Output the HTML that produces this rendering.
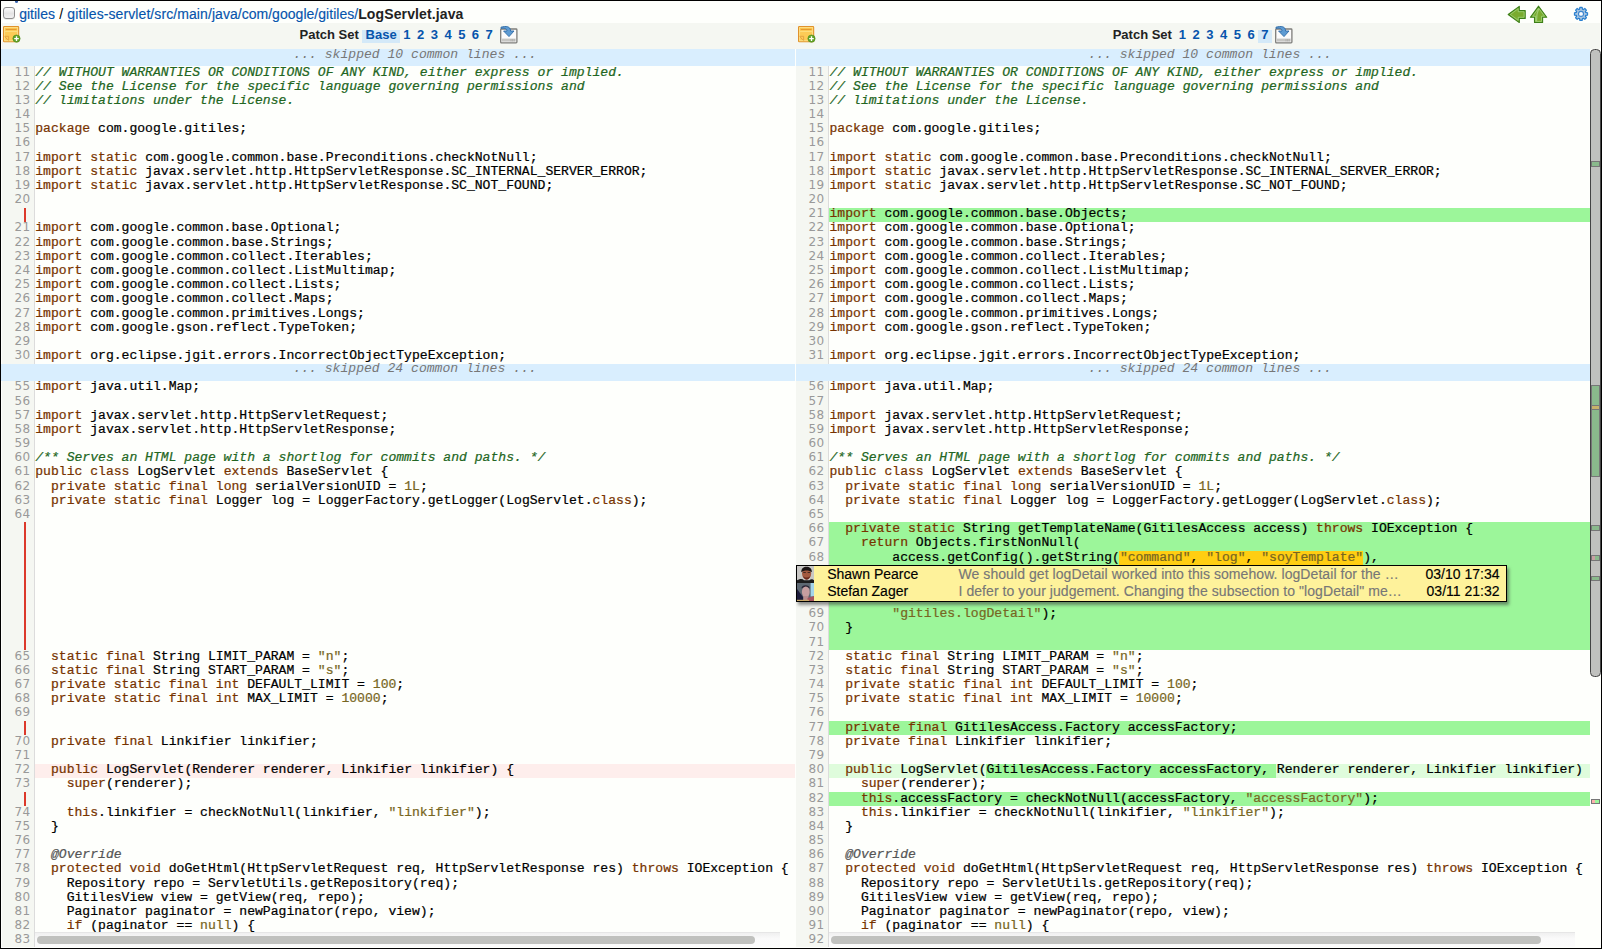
<!DOCTYPE html>
<html><head><meta charset="utf-8"><title>LogServlet.java</title>
<style>
html,body{margin:0;padding:0}
body{width:1602px;height:949px;position:relative;overflow:hidden;background:#fefffc;font-family:"Liberation Sans",Arial,sans-serif;color:#000}
.abs,.abs *{position:absolute}
div{position:absolute;box-sizing:border-box}
.gut{background:#f5f7f2;border-right:1px solid #dcdcdc}
.n{font:12px "DejaVu Sans","Liberation Sans",sans-serif;letter-spacing:.45px;color:#999;text-align:right;width:28.7px;height:14px;line-height:10.4px;white-space:pre}
pre{position:absolute;margin:0;font:13.08px "Liberation Mono",monospace;line-height:12.4px;height:14px;white-space:pre;color:#000;overflow:visible;-webkit-text-stroke:.22px currentColor}
pre i{font-style:italic}
.k{color:#730}.s{color:#762}.cm{color:#262}.mt{color:#555}
.ins{background:#9cf69a}.insbg{background:#dffcdc}.delbg{background:#feeeec}
.skip{background:#d9eefe;height:17px}
.skip span{position:absolute;left:34px;right:0;text-align:center;font:italic 13.08px "Liberation Mono",monospace;color:#777;line-height:17px;top:-3.5px}
.bar{background:#dc392b;width:2px}
a{color:#0654ac;text-decoration:none}
#path a,.cb div{-webkit-text-stroke:.15px currentColor}
.hdr{background:#f5f7f2}
.ps{font:bold 13px "Liberation Sans",Arial,sans-serif;line-height:13px;height:13px;white-space:pre;color:#222}
.ps a{display:inline-block;position:static;padding:0 3.25px;height:13px}
.selbg{background:#d4e9f8;height:12.7px;top:30px}
</style></head><body>

<div style="left:1px;top:1px;width:1600px;height:22px;background:#fefffc"></div>
<div style="left:15px;top:1px;width:3px;height:1.5px;background:#3a66b0;border-radius:0 0 2px 2px"></div>
<div style="left:3.2px;top:7px;width:11.8px;height:11.6px;border:1px solid #8e8e8e;border-radius:3px;background:linear-gradient(#fdfdfd,#e4e4e4 55%,#f2f2f2);box-shadow:0 .5px .5px rgba(0,0,0,.15)"></div>
<div id="path" style="left:19.2px;top:5.5px;height:16px;font-size:14px;line-height:16px;white-space:pre"><a>gitiles</a><span style="word-spacing:.35px"> / </span><a><span style="letter-spacing:.088px">gitiles-servlet/src/main/</span><span style="letter-spacing:.03px">java/com/google/gitiles/</span></a><b style="color:#222;letter-spacing:.12px">LogServlet.java</b></div>
<svg style="position:absolute;left:1504px;top:2px" width="48" height="24" viewBox="1504 2 48 24"><path d="M1508.2 14.5 L1519.3 6.4 L1519.3 10.6 L1525.2 10.6 L1525.2 18.4 L1519.3 18.4 L1519.3 22.6 Z" fill="#7aab2f" stroke="#3c7f18" stroke-width="1.1" stroke-linejoin="round"/><path d="M1510.3 14.5 L1518.2 8.7 L1518.2 11.7 L1524.1 11.7 L1524.1 17.3 L1518.2 17.3 L1518.2 20.3 Z" fill="none" stroke="#a9dc8c" stroke-width=".8" opacity=".85"/><path d="M1538.6 6.2 L1546.7 17.3 L1542.6 17.3 L1542.6 22.5 L1534.5 22.5 L1534.5 17.3 L1530.4 17.3 Z" fill="#7aab2f" stroke="#3c7f18" stroke-width="1.1" stroke-linejoin="round"/><path d="M1538.6 8.2 L1544.5 16.2 L1541.5 16.2 L1541.5 21.4 L1535.6 21.4 L1535.6 16.2 L1532.7 16.2 Z" fill="none" stroke="#a9dc8c" stroke-width=".8" opacity=".85"/><path d="M1538.6 9 L1537 14 L1536.5 21" fill="none" stroke="#b9e29e" stroke-width="1.2" opacity=".6"/></svg>
<svg style="position:absolute;left:1572px;top:5px" width="18" height="18" viewBox="1572 5 18 18"><polygon points="1585.68,12.45 1587.50,12.78 1587.50,15.02 1585.68,15.35 1585.33,16.19 1586.39,17.71 1584.81,19.29 1583.29,18.23 1582.45,18.58 1582.12,20.40 1579.88,20.40 1579.55,18.58 1578.71,18.23 1577.19,19.29 1575.61,17.71 1576.67,16.19 1576.32,15.35 1574.50,15.02 1574.50,12.78 1576.32,12.45 1576.67,11.61 1575.61,10.09 1577.19,8.51 1578.71,9.57 1579.55,9.22 1579.88,7.40 1582.12,7.40 1582.45,9.22 1583.29,9.57 1584.81,8.51 1586.39,10.09 1585.33,11.61" fill="#a9c6e0" stroke="#2a80d0" stroke-width="1.25" stroke-linejoin="round"/><circle cx="1581" cy="13.9" r="2.5" fill="#fbfdff" stroke="#3d86cf" stroke-width="1.1"/></svg>
<div class="hdr" style="left:2px;top:23px;width:1598px;height:26px"></div>
<svg style="position:absolute;left:3px;top:26px" width="18" height="18" viewBox="0 0 18 18"><rect x="0.55" y="0.55" width="15.1" height="15.2" rx=".7" fill="#fccb56" stroke="#e0922b" stroke-width="1.1"/><rect x="1.6" y="1.6" width="13" height="13.1" fill="none" stroke="#fde08a" stroke-width=".9"/><rect x="2.1" y="2.1" width="12" height="2.6" fill="#fbc148"/><rect x="2.9" y="3" width="10.6" height="1" fill="#e59a2e"/><rect x="2.1" y="4.8" width="12" height=".9" fill="#fde58f"/><path d="M1.6 10.3 L5.6 10.3 L5.6 14.6 M2 10.8 L5 14.2" fill="none" stroke="#e2a040" stroke-width=".9"/><circle cx="13.5" cy="12.6" r="3.65" fill="#62a126" stroke="#4f8e1e" stroke-width=".6"/><path d="M11.2 12.6 H15.8 M13.5 10.3 V14.9" stroke="#fff" stroke-width="1.35"/></svg>
<svg style="position:absolute;left:798px;top:26px" width="18" height="18" viewBox="0 0 18 18"><rect x="0.55" y="0.55" width="15.1" height="15.2" rx=".7" fill="#fccb56" stroke="#e0922b" stroke-width="1.1"/><rect x="1.6" y="1.6" width="13" height="13.1" fill="none" stroke="#fde08a" stroke-width=".9"/><rect x="2.1" y="2.1" width="12" height="2.6" fill="#fbc148"/><rect x="2.9" y="3" width="10.6" height="1" fill="#e59a2e"/><rect x="2.1" y="4.8" width="12" height=".9" fill="#fde58f"/><path d="M1.6 10.3 L5.6 10.3 L5.6 14.6 M2 10.8 L5 14.2" fill="none" stroke="#e2a040" stroke-width=".9"/><circle cx="13.5" cy="12.6" r="3.65" fill="#62a126" stroke="#4f8e1e" stroke-width=".6"/><path d="M11.2 12.6 H15.8 M13.5 10.3 V14.9" stroke="#fff" stroke-width="1.35"/></svg>
<div class="selbg" style="left:362px;width:38px"></div><div class="selbg" style="left:1258.3px;width:13.7px"></div>
<div class="ps" style="left:299.5px;top:28.2px">Patch Set <a class="sel">Base</a><a>1</a><a>2</a><a>3</a><a>4</a><a>5</a><a>6</a><a>7</a></div>
<svg style="position:absolute;left:500px;top:25.5px" width="18" height="18" viewBox="0 0 18 18"><rect x="0.7" y="3" width="16.2" height="13.9" rx=".8" fill="#fbfbfb" stroke="#7d7d7a" stroke-width="1.3"/><rect x="1.9" y="12.6" width="13.8" height="3" fill="#c6c6c3"/><path d="M11 13 V15.4 M12.6 13 V15.4 M14.2 13 V15.4" stroke="#a9a8a5" stroke-width=".7"/><path d="M1 1.2 C6 -0.2 10.5 0.2 10.6 5 L14 5 L9 10.6 L3.6 5 L7 5 C7 3 5 1.8 1 2.4 Z" fill="#5d9bd3" stroke="#2c6aa6" stroke-width=".9" stroke-linejoin="round"/></svg>
<div class="ps" style="left:1112.7px;top:28.2px">Patch Set <a>1</a><a>2</a><a>3</a><a>4</a><a>5</a><a>6</a><a class="sel">7</a></div>
<svg style="position:absolute;left:1275px;top:25.5px" width="18" height="18" viewBox="0 0 18 18"><rect x="0.7" y="3" width="16.2" height="13.9" rx=".8" fill="#fbfbfb" stroke="#7d7d7a" stroke-width="1.3"/><rect x="1.9" y="12.6" width="13.8" height="3" fill="#c6c6c3"/><path d="M11 13 V15.4 M12.6 13 V15.4 M14.2 13 V15.4" stroke="#a9a8a5" stroke-width=".7"/><path d="M1 1.2 C6 -0.2 10.5 0.2 10.6 5 L14 5 L9 10.6 L3.6 5 L7 5 C7 3 5 1.8 1 2.4 Z" fill="#5d9bd3" stroke="#2c6aa6" stroke-width=".9" stroke-linejoin="round"/></svg>
<div class="gut" style="left:2px;top:66px;width:33px;height:881px"></div>
<div class="gut" style="left:796px;top:66px;width:33px;height:881px"></div>
<div class="ins" style="left:829px;top:522px;width:761px;height:128.20px"></div>
<div class="delbg" style="left:35px;top:763.64px;width:760px;height:14.18px"></div>
<div class="ins" style="left:829px;top:207.80px;width:761px;height:14.18px"></div>
<div class="ins" style="left:829px;top:522.70px;width:761px;height:14.18px"></div>
<div class="ins" style="left:829px;top:536.88px;width:761px;height:14.18px"></div>
<div class="ins" style="left:829px;top:551.06px;width:761px;height:14.18px"></div>
<div class="ins" style="left:829px;top:607.66px;width:761px;height:14.18px"></div>
<div class="ins" style="left:829px;top:621.84px;width:761px;height:14.18px"></div>
<div class="ins" style="left:829px;top:636.02px;width:761px;height:14.18px"></div>
<div class="ins" style="left:829px;top:721.10px;width:761px;height:14.18px"></div>
<div class="insbg" style="left:829px;top:763.64px;width:761px;height:14.18px"></div>
<div class="ins" style="left:829px;top:792.00px;width:761px;height:14.18px"></div>
<div class="insbg" style="left:829px;top:763.64px;width:761px;height:14.18px"></div>
<div class="ins" style="left:985.96px;top:763.64px;width:290.38px;height:14.18px"></div>
<div style="background:#ffce12;left:1119.38px;top:551.06px;width:243.29px;height:14.18px"></div>
<div style="left:0;top:0;width:795px;height:947px;overflow:hidden">
<div class="n" style="left:2px;top:66.50px">11</div>
<pre style="left:35.25px;top:66.50px"><i class="cm">// WITHOUT WARRANTIES OR CONDITIONS OF ANY KIND, either express or implied.</i></pre>
<div class="n" style="left:2px;top:80.68px">12</div>
<pre style="left:35.25px;top:80.68px"><i class="cm">// See the License for the specific language governing permissions and</i></pre>
<div class="n" style="left:2px;top:94.86px">13</div>
<pre style="left:35.25px;top:94.86px"><i class="cm">// limitations under the License.</i></pre>
<div class="n" style="left:2px;top:109.04px">14</div>
<div class="n" style="left:2px;top:123.22px">15</div>
<pre style="left:35.25px;top:123.22px"><span class="k">package</span> com.google.gitiles;</pre>
<div class="n" style="left:2px;top:137.40px">16</div>
<div class="n" style="left:2px;top:151.58px">17</div>
<pre style="left:35.25px;top:151.58px"><span class="k">import</span> <span class="k">static</span> com.google.common.base.Preconditions.checkNotNull;</pre>
<div class="n" style="left:2px;top:165.76px">18</div>
<pre style="left:35.25px;top:165.76px"><span class="k">import</span> <span class="k">static</span> javax.servlet.http.HttpServletResponse.SC_INTERNAL_SERVER_ERROR;</pre>
<div class="n" style="left:2px;top:179.94px">19</div>
<pre style="left:35.25px;top:179.94px"><span class="k">import</span> <span class="k">static</span> javax.servlet.http.HttpServletResponse.SC_NOT_FOUND;</pre>
<div class="n" style="left:2px;top:194.12px">20</div>
<div class="n" style="left:2px;top:222.48px">21</div>
<pre style="left:35.25px;top:222.48px"><span class="k">import</span> com.google.common.base.Optional;</pre>
<div class="n" style="left:2px;top:236.66px">22</div>
<pre style="left:35.25px;top:236.66px"><span class="k">import</span> com.google.common.base.Strings;</pre>
<div class="n" style="left:2px;top:250.84px">23</div>
<pre style="left:35.25px;top:250.84px"><span class="k">import</span> com.google.common.collect.Iterables;</pre>
<div class="n" style="left:2px;top:265.02px">24</div>
<pre style="left:35.25px;top:265.02px"><span class="k">import</span> com.google.common.collect.ListMultimap;</pre>
<div class="n" style="left:2px;top:279.20px">25</div>
<pre style="left:35.25px;top:279.20px"><span class="k">import</span> com.google.common.collect.Lists;</pre>
<div class="n" style="left:2px;top:293.38px">26</div>
<pre style="left:35.25px;top:293.38px"><span class="k">import</span> com.google.common.collect.Maps;</pre>
<div class="n" style="left:2px;top:307.56px">27</div>
<pre style="left:35.25px;top:307.56px"><span class="k">import</span> com.google.common.primitives.Longs;</pre>
<div class="n" style="left:2px;top:321.74px">28</div>
<pre style="left:35.25px;top:321.74px"><span class="k">import</span> com.google.gson.reflect.TypeToken;</pre>
<div class="n" style="left:2px;top:335.92px">29</div>
<div class="n" style="left:2px;top:350.10px">30</div>
<pre style="left:35.25px;top:350.10px"><span class="k">import</span> org.eclipse.jgit.errors.IncorrectObjectTypeException;</pre>
<div class="n" style="left:2px;top:381.40px">55</div>
<pre style="left:35.25px;top:381.40px"><span class="k">import</span> java.util.Map;</pre>
<div class="n" style="left:2px;top:395.58px">56</div>
<div class="n" style="left:2px;top:409.76px">57</div>
<pre style="left:35.25px;top:409.76px"><span class="k">import</span> javax.servlet.http.HttpServletRequest;</pre>
<div class="n" style="left:2px;top:423.94px">58</div>
<pre style="left:35.25px;top:423.94px"><span class="k">import</span> javax.servlet.http.HttpServletResponse;</pre>
<div class="n" style="left:2px;top:438.12px">59</div>
<div class="n" style="left:2px;top:452.30px">60</div>
<pre style="left:35.25px;top:452.30px"><i class="cm">/** Serves an HTML page with a shortlog for commits and paths. */</i></pre>
<div class="n" style="left:2px;top:466.48px">61</div>
<pre style="left:35.25px;top:466.48px"><span class="k">public</span> <span class="k">class</span> LogServlet <span class="k">extends</span> BaseServlet {</pre>
<div class="n" style="left:2px;top:480.66px">62</div>
<pre style="left:35.25px;top:480.66px">  <span class="k">private</span> <span class="k">static</span> <span class="k">final</span> <span class="k">long</span> serialVersionUID = <span class="s">1L</span>;</pre>
<div class="n" style="left:2px;top:494.84px">63</div>
<pre style="left:35.25px;top:494.84px">  <span class="k">private</span> <span class="k">static</span> <span class="k">final</span> Logger log = LoggerFactory.getLogger(LogServlet.<span class="k">class</span>);</pre>
<div class="n" style="left:2px;top:509.02px">64</div>
<div class="n" style="left:2px;top:650.70px">65</div>
<pre style="left:35.25px;top:650.70px">  <span class="k">static</span> <span class="k">final</span> String LIMIT_PARAM = <span class="s">&quot;n&quot;</span>;</pre>
<div class="n" style="left:2px;top:664.88px">66</div>
<pre style="left:35.25px;top:664.88px">  <span class="k">static</span> <span class="k">final</span> String START_PARAM = <span class="s">&quot;s&quot;</span>;</pre>
<div class="n" style="left:2px;top:679.06px">67</div>
<pre style="left:35.25px;top:679.06px">  <span class="k">private</span> <span class="k">static</span> <span class="k">final</span> <span class="k">int</span> DEFAULT_LIMIT = <span class="s">100</span>;</pre>
<div class="n" style="left:2px;top:693.24px">68</div>
<pre style="left:35.25px;top:693.24px">  <span class="k">private</span> <span class="k">static</span> <span class="k">final</span> <span class="k">int</span> MAX_LIMIT = <span class="s">10000</span>;</pre>
<div class="n" style="left:2px;top:707.42px">69</div>
<div class="n" style="left:2px;top:735.78px">70</div>
<pre style="left:35.25px;top:735.78px">  <span class="k">private</span> <span class="k">final</span> Linkifier linkifier;</pre>
<div class="n" style="left:2px;top:749.96px">71</div>
<div class="n" style="left:2px;top:764.14px">72</div>
<pre style="left:35.25px;top:764.14px">  <span class="k">public</span> LogServlet(Renderer renderer, Linkifier linkifier) {</pre>
<div class="n" style="left:2px;top:778.32px">73</div>
<pre style="left:35.25px;top:778.32px">    <span class="k">super</span>(renderer);</pre>
<div class="n" style="left:2px;top:806.68px">74</div>
<pre style="left:35.25px;top:806.68px">    <span class="k">this</span>.linkifier = checkNotNull(linkifier, <span class="s">&quot;linkifier&quot;</span>);</pre>
<div class="n" style="left:2px;top:820.86px">75</div>
<pre style="left:35.25px;top:820.86px">  }</pre>
<div class="n" style="left:2px;top:835.04px">76</div>
<div class="n" style="left:2px;top:849.22px">77</div>
<pre style="left:35.25px;top:849.22px">  <i class="mt">@Override</i></pre>
<div class="n" style="left:2px;top:863.40px">78</div>
<pre style="left:35.25px;top:863.40px">  <span class="k">protected</span> <span class="k">void</span> doGetHtml(HttpServletRequest req, HttpServletResponse res) <span class="k">throws</span> IOException {</pre>
<div class="n" style="left:2px;top:877.58px">79</div>
<pre style="left:35.25px;top:877.58px">    Repository repo = ServletUtils.getRepository(req);</pre>
<div class="n" style="left:2px;top:891.76px">80</div>
<pre style="left:35.25px;top:891.76px">    GitilesView view = getView(req, repo);</pre>
<div class="n" style="left:2px;top:905.94px">81</div>
<pre style="left:35.25px;top:905.94px">    Paginator paginator = newPaginator(repo, view);</pre>
<div class="n" style="left:2px;top:920.12px">82</div>
<pre style="left:35.25px;top:920.12px">    <span class="k">if</span> (paginator == <span class="s">null</span>) {</pre>
<div class="n" style="left:2px;top:934.30px">83</div>
<pre style="left:35.25px;top:934.30px">      res.setStatus(SC_NOT_FOUND);</pre>
</div>
<div style="left:0;top:0;width:1590px;height:947px;overflow:hidden">
<div class="n" style="left:796px;top:66.50px">11</div>
<pre style="left:829.5px;top:66.50px"><i class="cm">// WITHOUT WARRANTIES OR CONDITIONS OF ANY KIND, either express or implied.</i></pre>
<div class="n" style="left:796px;top:80.68px">12</div>
<pre style="left:829.5px;top:80.68px"><i class="cm">// See the License for the specific language governing permissions and</i></pre>
<div class="n" style="left:796px;top:94.86px">13</div>
<pre style="left:829.5px;top:94.86px"><i class="cm">// limitations under the License.</i></pre>
<div class="n" style="left:796px;top:109.04px">14</div>
<div class="n" style="left:796px;top:123.22px">15</div>
<pre style="left:829.5px;top:123.22px"><span class="k">package</span> com.google.gitiles;</pre>
<div class="n" style="left:796px;top:137.40px">16</div>
<div class="n" style="left:796px;top:151.58px">17</div>
<pre style="left:829.5px;top:151.58px"><span class="k">import</span> <span class="k">static</span> com.google.common.base.Preconditions.checkNotNull;</pre>
<div class="n" style="left:796px;top:165.76px">18</div>
<pre style="left:829.5px;top:165.76px"><span class="k">import</span> <span class="k">static</span> javax.servlet.http.HttpServletResponse.SC_INTERNAL_SERVER_ERROR;</pre>
<div class="n" style="left:796px;top:179.94px">19</div>
<pre style="left:829.5px;top:179.94px"><span class="k">import</span> <span class="k">static</span> javax.servlet.http.HttpServletResponse.SC_NOT_FOUND;</pre>
<div class="n" style="left:796px;top:194.12px">20</div>
<div class="n" style="left:796px;top:208.30px">21</div>
<pre style="left:829.5px;top:208.30px"><span class="k">import</span> com.google.common.base.Objects;</pre>
<div class="n" style="left:796px;top:222.48px">22</div>
<pre style="left:829.5px;top:222.48px"><span class="k">import</span> com.google.common.base.Optional;</pre>
<div class="n" style="left:796px;top:236.66px">23</div>
<pre style="left:829.5px;top:236.66px"><span class="k">import</span> com.google.common.base.Strings;</pre>
<div class="n" style="left:796px;top:250.84px">24</div>
<pre style="left:829.5px;top:250.84px"><span class="k">import</span> com.google.common.collect.Iterables;</pre>
<div class="n" style="left:796px;top:265.02px">25</div>
<pre style="left:829.5px;top:265.02px"><span class="k">import</span> com.google.common.collect.ListMultimap;</pre>
<div class="n" style="left:796px;top:279.20px">26</div>
<pre style="left:829.5px;top:279.20px"><span class="k">import</span> com.google.common.collect.Lists;</pre>
<div class="n" style="left:796px;top:293.38px">27</div>
<pre style="left:829.5px;top:293.38px"><span class="k">import</span> com.google.common.collect.Maps;</pre>
<div class="n" style="left:796px;top:307.56px">28</div>
<pre style="left:829.5px;top:307.56px"><span class="k">import</span> com.google.common.primitives.Longs;</pre>
<div class="n" style="left:796px;top:321.74px">29</div>
<pre style="left:829.5px;top:321.74px"><span class="k">import</span> com.google.gson.reflect.TypeToken;</pre>
<div class="n" style="left:796px;top:335.92px">30</div>
<div class="n" style="left:796px;top:350.10px">31</div>
<pre style="left:829.5px;top:350.10px"><span class="k">import</span> org.eclipse.jgit.errors.IncorrectObjectTypeException;</pre>
<div class="n" style="left:796px;top:381.40px">56</div>
<pre style="left:829.5px;top:381.40px"><span class="k">import</span> java.util.Map;</pre>
<div class="n" style="left:796px;top:395.58px">57</div>
<div class="n" style="left:796px;top:409.76px">58</div>
<pre style="left:829.5px;top:409.76px"><span class="k">import</span> javax.servlet.http.HttpServletRequest;</pre>
<div class="n" style="left:796px;top:423.94px">59</div>
<pre style="left:829.5px;top:423.94px"><span class="k">import</span> javax.servlet.http.HttpServletResponse;</pre>
<div class="n" style="left:796px;top:438.12px">60</div>
<div class="n" style="left:796px;top:452.30px">61</div>
<pre style="left:829.5px;top:452.30px"><i class="cm">/** Serves an HTML page with a shortlog for commits and paths. */</i></pre>
<div class="n" style="left:796px;top:466.48px">62</div>
<pre style="left:829.5px;top:466.48px"><span class="k">public</span> <span class="k">class</span> LogServlet <span class="k">extends</span> BaseServlet {</pre>
<div class="n" style="left:796px;top:480.66px">63</div>
<pre style="left:829.5px;top:480.66px">  <span class="k">private</span> <span class="k">static</span> <span class="k">final</span> <span class="k">long</span> serialVersionUID = <span class="s">1L</span>;</pre>
<div class="n" style="left:796px;top:494.84px">64</div>
<pre style="left:829.5px;top:494.84px">  <span class="k">private</span> <span class="k">static</span> <span class="k">final</span> Logger log = LoggerFactory.getLogger(LogServlet.<span class="k">class</span>);</pre>
<div class="n" style="left:796px;top:509.02px">65</div>
<div class="n" style="left:796px;top:523.20px">66</div>
<pre style="left:829.5px;top:523.20px">  <span class="k">private</span> <span class="k">static</span> String getTemplateName(GitilesAccess access) <span class="k">throws</span> IOException {</pre>
<div class="n" style="left:796px;top:537.38px">67</div>
<pre style="left:829.5px;top:537.38px">    <span class="k">return</span> Objects.firstNonNull(</pre>
<div class="n" style="left:796px;top:551.56px">68</div>
<pre style="left:829.5px;top:551.56px">        access.getConfig().getString(<span class="s">&quot;command&quot;</span>, <span class="s">&quot;log&quot;</span>, <span class="s">&quot;soyTemplate&quot;</span>),</pre>
<div class="n" style="left:796px;top:608.16px">69</div>
<pre style="left:829.5px;top:608.16px">        <span class="s">&quot;gitiles.logDetail&quot;</span>);</pre>
<div class="n" style="left:796px;top:622.34px">70</div>
<pre style="left:829.5px;top:622.34px">  }</pre>
<div class="n" style="left:796px;top:636.52px">71</div>
<div class="n" style="left:796px;top:650.70px">72</div>
<pre style="left:829.5px;top:650.70px">  <span class="k">static</span> <span class="k">final</span> String LIMIT_PARAM = <span class="s">&quot;n&quot;</span>;</pre>
<div class="n" style="left:796px;top:664.88px">73</div>
<pre style="left:829.5px;top:664.88px">  <span class="k">static</span> <span class="k">final</span> String START_PARAM = <span class="s">&quot;s&quot;</span>;</pre>
<div class="n" style="left:796px;top:679.06px">74</div>
<pre style="left:829.5px;top:679.06px">  <span class="k">private</span> <span class="k">static</span> <span class="k">final</span> <span class="k">int</span> DEFAULT_LIMIT = <span class="s">100</span>;</pre>
<div class="n" style="left:796px;top:693.24px">75</div>
<pre style="left:829.5px;top:693.24px">  <span class="k">private</span> <span class="k">static</span> <span class="k">final</span> <span class="k">int</span> MAX_LIMIT = <span class="s">10000</span>;</pre>
<div class="n" style="left:796px;top:707.42px">76</div>
<div class="n" style="left:796px;top:721.60px">77</div>
<pre style="left:829.5px;top:721.60px">  <span class="k">private</span> <span class="k">final</span> GitilesAccess.Factory accessFactory;</pre>
<div class="n" style="left:796px;top:735.78px">78</div>
<pre style="left:829.5px;top:735.78px">  <span class="k">private</span> <span class="k">final</span> Linkifier linkifier;</pre>
<div class="n" style="left:796px;top:749.96px">79</div>
<div class="n" style="left:796px;top:764.14px">80</div>
<pre style="left:829.5px;top:764.14px">  <span class="k">public</span> LogServlet(GitilesAccess.Factory accessFactory, Renderer renderer, Linkifier linkifier) {</pre>
<div class="n" style="left:796px;top:778.32px">81</div>
<pre style="left:829.5px;top:778.32px">    <span class="k">super</span>(renderer);</pre>
<div class="n" style="left:796px;top:792.50px">82</div>
<pre style="left:829.5px;top:792.50px">    <span class="k">this</span>.accessFactory = checkNotNull(accessFactory, <span class="s">&quot;accessFactory&quot;</span>);</pre>
<div class="n" style="left:796px;top:806.68px">83</div>
<pre style="left:829.5px;top:806.68px">    <span class="k">this</span>.linkifier = checkNotNull(linkifier, <span class="s">&quot;linkifier&quot;</span>);</pre>
<div class="n" style="left:796px;top:820.86px">84</div>
<pre style="left:829.5px;top:820.86px">  }</pre>
<div class="n" style="left:796px;top:835.04px">85</div>
<div class="n" style="left:796px;top:849.22px">86</div>
<pre style="left:829.5px;top:849.22px">  <i class="mt">@Override</i></pre>
<div class="n" style="left:796px;top:863.40px">87</div>
<pre style="left:829.5px;top:863.40px">  <span class="k">protected</span> <span class="k">void</span> doGetHtml(HttpServletRequest req, HttpServletResponse res) <span class="k">throws</span> IOException {</pre>
<div class="n" style="left:796px;top:877.58px">88</div>
<pre style="left:829.5px;top:877.58px">    Repository repo = ServletUtils.getRepository(req);</pre>
<div class="n" style="left:796px;top:891.76px">89</div>
<pre style="left:829.5px;top:891.76px">    GitilesView view = getView(req, repo);</pre>
<div class="n" style="left:796px;top:905.94px">90</div>
<pre style="left:829.5px;top:905.94px">    Paginator paginator = newPaginator(repo, view);</pre>
<div class="n" style="left:796px;top:920.12px">91</div>
<pre style="left:829.5px;top:920.12px">    <span class="k">if</span> (paginator == <span class="s">null</span>) {</pre>
<div class="n" style="left:796px;top:934.30px">92</div>
<pre style="left:829.5px;top:934.30px">      res.setStatus(SC_NOT_FOUND);</pre>
</div>
<div class="bar" style="left:24px;top:207.90px;height:14.08px"></div>
<div class="bar" style="left:24px;top:522.10px;height:127.90px"></div>
<div class="bar" style="left:24px;top:721.20px;height:13.48px"></div>
<div class="bar" style="left:24px;top:792.10px;height:13.48px"></div>
<div class="skip" style="left:1px;top:49.00px;width:794px;height:17.00px"><span>... skipped 10 common lines ...</span></div>
<div class="skip" style="left:796px;top:49.00px;width:794px;height:17.00px"><span>... skipped 10 common lines ...</span></div>
<div class="skip" style="left:1px;top:363.78px;width:794px;height:17.12px"><span>... skipped 24 common lines ...</span></div>
<div class="skip" style="left:796px;top:363.78px;width:794px;height:17.12px"><span>... skipped 24 common lines ...</span></div>
<div class="cb" style="left:796px;top:565px;width:711px;height:36.6px;border:1px solid #000;background:#fef29b;box-shadow:2px 3px 3px rgba(60,60,60,.55);font-size:14px;white-space:pre;overflow:hidden">
<svg style="position:absolute;left:0;top:0" width="17" height="35" viewBox="0 0 17 35"><defs><filter id="bl" x="-10%" y="-10%" width="120%" height="120%"><feGaussianBlur stdDeviation=".55"/></filter><clipPath id="c1"><rect x="0" y="0" width="17" height="17"/></clipPath><clipPath id="c2"><rect x="0" y="17" width="17" height="18"/></clipPath></defs>
<g clip-path="url(#c1)"><rect x="0" y="0" width="17" height="17" fill="#c9c8c5"/><g filter="url(#bl)"><ellipse cx="9.6" cy="7.6" rx="4.6" ry="5.6" fill="#a35a40"/><path d="M4.3 6.2 C3.8 -1 15.2 -1 14.9 6.2 C12 3.9 7 3.9 4.3 6.2 Z" fill="#1b1918"/><path d="M6 10.2 C7.4 14.8 12 14.8 13.2 10.2 C11 12 8 12 6 10.2 Z" fill="#6b2a1e"/><rect x="6.2" y="6" width="2.6" height=".9" fill="#3a2622"/><rect x="10.6" y="6" width="2.6" height=".9" fill="#3a2622"/><path d="M-1 18 L-1 15 C3 12.4 5.4 12.6 7 14.2 L12.4 14.2 C14 12.6 16 13 18 15 L18 18 Z" fill="#1b1b1d"/></g></g>
<g clip-path="url(#c2)"><rect x="0" y="17" width="17" height="18" fill="#5d6872"/><g filter="url(#bl)"><path d="M0 23 L6 31 L6 35 L0 35 Z" fill="#1d1b3a"/><rect x="13.6" y="17" width="4" height="13.5" fill="#a4d4ea"/><path d="M4.4 22.4 C4.6 18.2 12.6 18.2 12.8 22.4 C10 20.4 7 20.4 4.4 22.4Z" fill="#2a2434"/><ellipse cx="8.8" cy="26" rx="3.9" ry="5.6" fill="#c79ea0"/><rect x="6.4" y="30" width="5" height="5" fill="#b98c8e"/><path d="M10.5 32 L17 30 L17 35 L10.5 35 Z" fill="#a8525e"/><rect x="0" y="33.8" width="12" height="1.2" fill="#c9a86a"/></g></g></svg>
<div style="left:30.2px;top:0;height:17.25px;line-height:17.25px;color:#000">Shawn Pearce</div>
<div style="left:30.2px;top:17.25px;height:17.25px;line-height:17.25px;color:#000">Stefan Zager</div>
<div style="left:161.5px;top:0;height:17.25px;line-height:17.25px;color:#777;letter-spacing:.068px">We should get logDetail worked into this somehow. logDetail for the …</div>
<div style="left:161.5px;top:17.25px;height:17.25px;line-height:17.25px;color:#777;letter-spacing:.066px">I defer to your judgement. Changing the subsection to "logDetail" me…</div>
<div style="right:6.5px;top:0;height:17.25px;line-height:17.25px;color:#000">03/10 17:34</div>
<div style="right:6.5px;top:17.25px;height:17.25px;line-height:17.25px;color:#000">03/11 21:32</div>
</div>
<div style="left:35px;top:932px;width:745px;height:15px;background:linear-gradient(#f0f0f0,#fafafa 40%,#fbfbfb);border-top:1px solid #e6e6e6"></div>
<div style="left:37px;top:936px;width:718px;height:8px;background:#c0c1be;border-radius:4px"></div>
<div style="left:780px;top:932px;width:15px;height:15px;background:#fefffc"></div>
<div style="left:829px;top:932px;width:746px;height:15px;background:linear-gradient(#f0f0f0,#fafafa 40%,#fbfbfb);border-top:1px solid #e6e6e6"></div>
<div style="left:831px;top:936px;width:710px;height:8px;background:#c0c1be;border-radius:4px"></div>
<div style="left:1575px;top:932px;width:15px;height:15px;background:#fefffc"></div>
<div style="left:1590px;top:49px;width:11px;height:898px;background:#fefffc"></div>
<div style="left:1590px;top:49px;width:11px;height:628px;background:#c0c1be;border:1px solid #444;border-radius:4.5px"></div>
<div style="left:1591px;top:160.9px;width:9px;height:5.8px;background:#8aba8c;border:1px solid #777"></div>
<div style="left:1591px;top:385.2px;width:9px;height:91.4px;background:#8aba8c;border:1px solid #777"></div>
<div style="left:1591px;top:405.4px;width:9px;height:4.4px;background:#c9b26a;border:1px solid #777"></div>
<div style="left:1591px;top:525.3px;width:9px;height:5.5px;background:#8aba8c;border:1px solid #777"></div>
<div style="left:1591px;top:555.3px;width:9px;height:5.6px;background:linear-gradient(90deg,#c9a0a4 43%,#8aba8c 43%);border:1px solid #777"></div>
<div style="left:1591px;top:576.1px;width:9px;height:4.8px;background:#8aba8c;border:1px solid #777"></div>
<div style="left:1591px;top:799px;width:9px;height:5px;background:linear-gradient(90deg,#fdb0ae 45%,#9cf69a 45%);border:1px solid #777"></div>
<div style="left:0;top:0;width:1602px;height:949px;border:1px solid #000"></div>
</body></html>
